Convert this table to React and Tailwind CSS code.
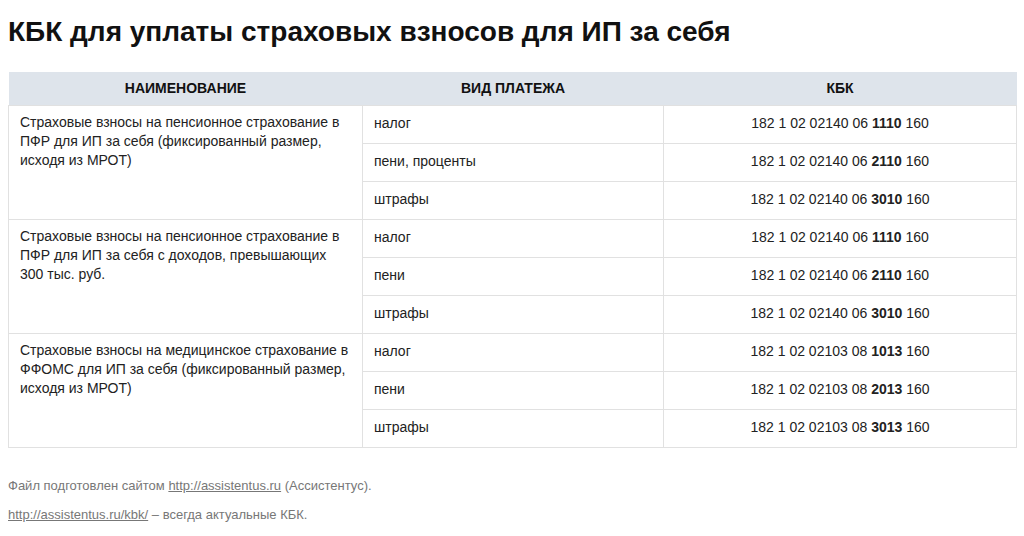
const groups = [
  {
    name: 'Страховые взносы на пенсионное страхование в ПФР для ИП за себя (фиксированный размер, исходя из МРОТ)',
    rows: [
      ['налог', '182 1 02 02140 06', '1110'],
      ['пени, проценты', '182 1 02 02140 06', '2110'],
      ['штрафы', '182 1 02 02140 06', '3010'],
    ],
  },
  {
    name: 'Страховые взносы на пенсионное страхование в ПФР для ИП за себя с доходов, превышающих 300 тыс. руб.',
    rows: [
      ['налог', '182 1 02 02140 06', '1110'],
      ['пени', '182 1 02 02140 06', '2110'],
      ['штрафы', '182 1 02 02140 06', '3010'],
    ],
  },
  {
    name: 'Страховые взносы на медицинское страхование в ФФОМС для ИП за себя (фиксированный размер, исходя из МРОТ)',
    rows: [
      ['налог', '182 1 02 02103 08', '1013'],
      ['пени', '182 1 02 02103 08', '2013'],
      ['штрафы', '182 1 02 02103 08', '3013'],
    ],
  },
]

export default function App() {
  return (
    <div className="min-h-[536px] bg-white px-2 pt-[14px] font-['Liberation_Sans',Arial,sans-serif] text-[#222]">
      <h1 className="text-[28px] font-bold leading-[36px] text-[#111]">КБК для уплаты страховых взносов для ИП за себя</h1>
      <table className="mt-[22px] w-[1008px] table-fixed border-collapse text-[14px] leading-[19px]">
        <colgroup>
          <col className="w-[354px]" />
          <col className="w-[301px]" />
          <col className="w-[353px]" />
        </colgroup>
        <thead>
          <tr className="h-[33px] bg-[#dee4eb]">
            <th className="text-center text-[14px] font-bold uppercase text-[#111]">Наименование</th>
            <th className="text-center text-[14px] font-bold uppercase text-[#111]">Вид платежа</th>
            <th className="text-center text-[14px] font-bold uppercase text-[#111]">КБК</th>
          </tr>
        </thead>
        <tbody>
          {groups.map((g, gi) =>
            g.rows.map((r, ri) => (
              <tr key={`${gi}-${ri}`} className="h-[38px]">
                {ri === 0 ? (
                  <td rowSpan={3} className="border border-[#e1e1e1] px-[11px] pt-[7px] pb-2 align-top">
                    {g.name}
                  </td>
                ) : null}
                <td className="border border-[#e1e1e1] px-[11px] pb-px align-middle">{r[0]}</td>
                <td className="border border-[#e1e1e1] px-[11px] pb-px text-center align-middle">
                  {r[1]} <b>{r[2]}</b> 160
                </td>
              </tr>
            ))
          )}
        </tbody>
      </table>
      <div className="mt-[30px] text-[13px] leading-[16px] text-[#777]">
        <p>
          Файл подготовлен сайтом <span className="underline">http://assistentus.ru</span> (Ассистентус).
        </p>
        <p className="mt-[13px]">
          <span className="underline">http://assistentus.ru/kbk/</span> – всегда актуальные КБК.
        </p>
      </div>
    </div>
  )
}
